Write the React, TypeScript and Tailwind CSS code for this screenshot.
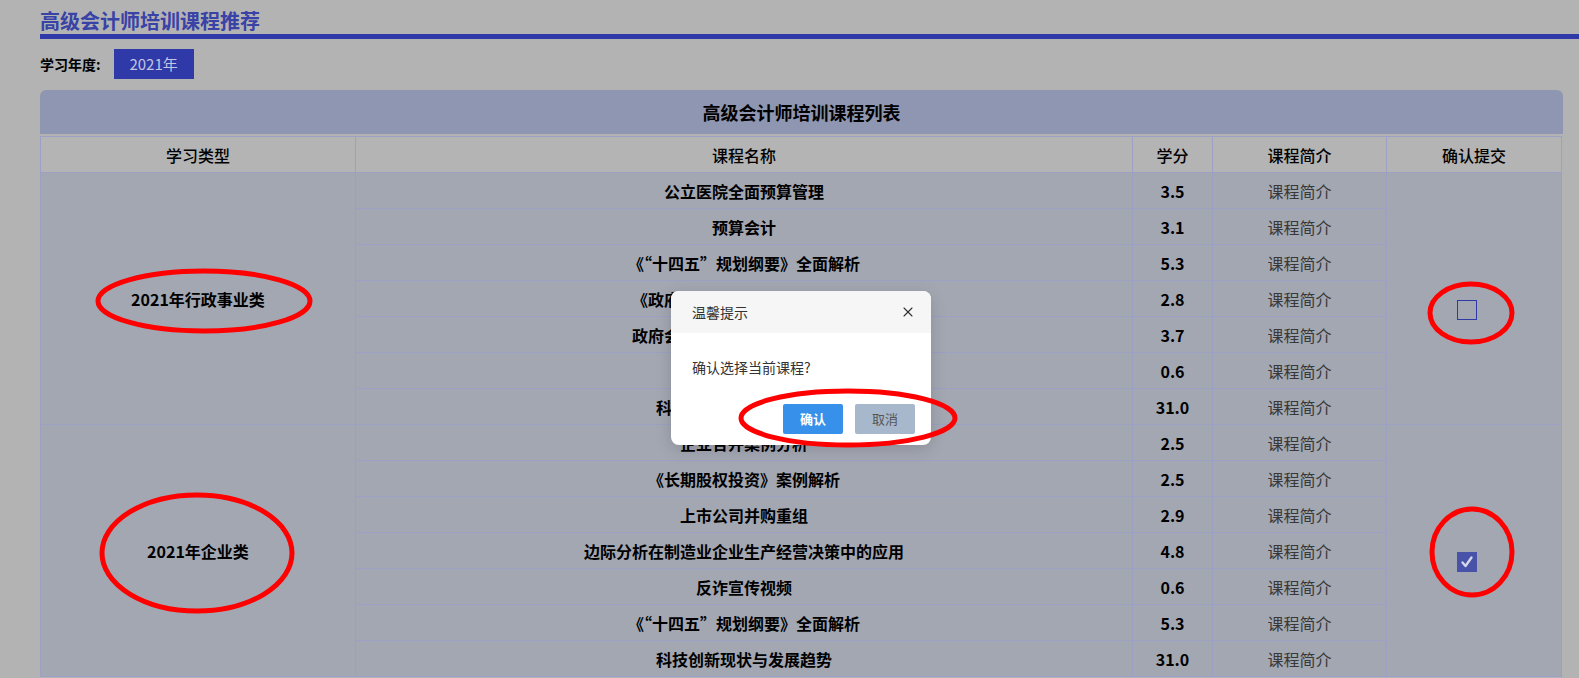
import { X } from "lucide-react";

type Course = { name: string; credit: string };
type Group = { label: string; checked: boolean; courses: Course[] };

const groups: Group[] = [
  {
    label: "2021年行政事业类",
    checked: false,
    courses: [
      { name: "公立医院全面预算管理", credit: "3.5" },
      { name: "预算会计", credit: "3.1" },
      { name: "《“十四五”规划纲要》全面解析", credit: "5.3" },
      { name: "《政府会计制度》重点难点解析", credit: "2.8" },
      { name: "政府会计准则制度的衔接与应用", credit: "3.7" },
      { name: "反诈宣传视频", credit: "0.6" },
      { name: "科技创新现状与发展趋势", credit: "31.0" },
    ],
  },
  {
    label: "2021年企业类",
    checked: true,
    courses: [
      { name: "企业合并案例分析", credit: "2.5" },
      { name: "《长期股权投资》案例解析", credit: "2.5" },
      { name: "上市公司并购重组", credit: "2.9" },
      { name: "边际分析在制造业企业生产经营决策中的应用", credit: "4.8" },
      { name: "反诈宣传视频", credit: "0.6" },
      { name: "《“十四五”规划纲要》全面解析", credit: "5.3" },
      { name: "科技创新现状与发展趋势", credit: "31.0" },
    ],
  },
];

function CheckBox({ checked }: { checked: boolean }) {
  if (checked) {
    return (
      <div className="mt-[22px] mr-[15px] flex h-[20px] w-[20px] items-center justify-center bg-[#4752a8]">
        <svg width="14" height="14" viewBox="0 0 14 14">
          <path d="M2.5 7.5 L5.5 11 L11.5 2.5" fill="none" stroke="#d4d7ea" strokeWidth="2.4" strokeLinecap="round" strokeLinejoin="round" />
        </svg>
      </div>
    );
  }
  return <div className="mt-[22px] mr-[15px] h-[20px] w-[20px] border border-[#2f3aa8]" />;
}

function CourseTable() {
  return (
    <div className="mt-[11px] w-[1523px]">
      <div className="flex h-[44px] items-center justify-center rounded-t-[6px] bg-[#8f96b1] text-[18px] font-bold text-black">
        高级会计师培训课程列表
      </div>
      <table className="mt-[2px] w-[1521px] table-fixed border-collapse text-[16px] text-black">
        <colgroup>
          <col className="w-[315px]" />
          <col className="w-[777px]" />
          <col className="w-[80px]" />
          <col className="w-[174px]" />
          <col className="w-[175px]" />
        </colgroup>
        <thead>
          <tr className="h-[36px] bg-[#b4b4b4]">
            {["学习类型", "课程名称", "学分", "课程简介", "确认提交"].map((h) => (
              <th key={h} className="border border-[#9ba0c4] p-0 text-center font-medium">
                {h}
              </th>
            ))}
          </tr>
        </thead>
        <tbody className="bg-[#a3a7b2]">
          {groups.map((g) =>
            g.courses.map((c, i) => (
              <tr key={g.label + i} className="h-[36px]">
                {i === 0 && (
                  <td rowSpan={g.courses.length} className="border border-[#9ba0c4] p-0 text-center font-bold">
                    {g.label}
                  </td>
                )}
                <td className="border border-[#9ba0c4] p-0 text-center font-bold">{c.name}</td>
                <td className="border border-[#9ba0c4] p-0 text-center font-bold">{c.credit}</td>
                <td className="border border-[#9ba0c4] p-0 text-center text-[#383838]">课程简介</td>
                {i === 0 && (
                  <td rowSpan={g.courses.length} className="border border-[#9ba0c4] p-0">
                    <div className="flex items-center justify-center">
                      <CheckBox checked={g.checked} />
                    </div>
                  </td>
                )}
              </tr>
            ))
          )}
        </tbody>
      </table>
    </div>
  );
}

function ConfirmDialog() {
  return (
    <div className="absolute left-[671px] top-[291px] w-[260px] overflow-hidden rounded-[8px] bg-white shadow-[0_4px_16px_rgba(0,0,0,0.15)]">
      <div className="flex h-[42px] items-center justify-between bg-[#f6f6f6] pl-[21px] pr-[15px] text-[14px] text-[#333]">
        <span>温馨提示</span>
        <X size={16} strokeWidth={1.6} className="text-[#333]" />
      </div>
      <div className="px-[21px] pt-[24px] text-[14px] text-[#333]">确认选择当前课程?</div>
      <div className="flex justify-end gap-[12px] pr-[16px] pb-[11px] pt-[26px]">
        <button className="h-[30px] w-[60px] rounded-[2px] bg-[#3790ea] text-[13px] font-bold text-white">确认</button>
        <button className="h-[30px] w-[60px] rounded-[2px] bg-[#a8b8cc] text-[13px] text-[#555]">取消</button>
      </div>
    </div>
  );
}

function Annotations() {
  return (
    <svg className="pointer-events-none absolute left-0 top-0" width="1579" height="678">
      <g fill="none" stroke="#ff0000" strokeWidth="5">
        <ellipse cx="204" cy="301" rx="106" ry="30" />
        <ellipse cx="197" cy="553" rx="95" ry="58" />
        <ellipse cx="848" cy="418" rx="107" ry="27" />
        <ellipse cx="1471" cy="313" rx="41" ry="29" />
        <ellipse cx="1472" cy="552" rx="40" ry="43" />
      </g>
    </svg>
  );
}

export default function App() {
  return (
    <div className="relative h-[678px] w-[1579px] overflow-hidden bg-[#b3b3b3] font-['Noto_Sans_CJK_SC','Noto_Sans',sans-serif]">
      <div className="pl-[40px] pt-[7px]">
        <h2 className="h-[27px] text-[20px] leading-[27px] font-bold text-[#3942a6]">高级会计师培训课程推荐</h2>
        <div className="h-[5px] bg-[#2f3aa8]" />
        <div className="mt-[10px] flex items-center gap-[13px]">
          <span className="text-[14px] font-bold text-black">学习年度:</span>
          <div className="flex h-[30px] w-[80px] items-center justify-center bg-[#2f3aa8] text-[15px] text-[#c3c6e2]">
            2021年
          </div>
        </div>
        <CourseTable />
      </div>
      <ConfirmDialog />
      <Annotations />
    </div>
  );
}
